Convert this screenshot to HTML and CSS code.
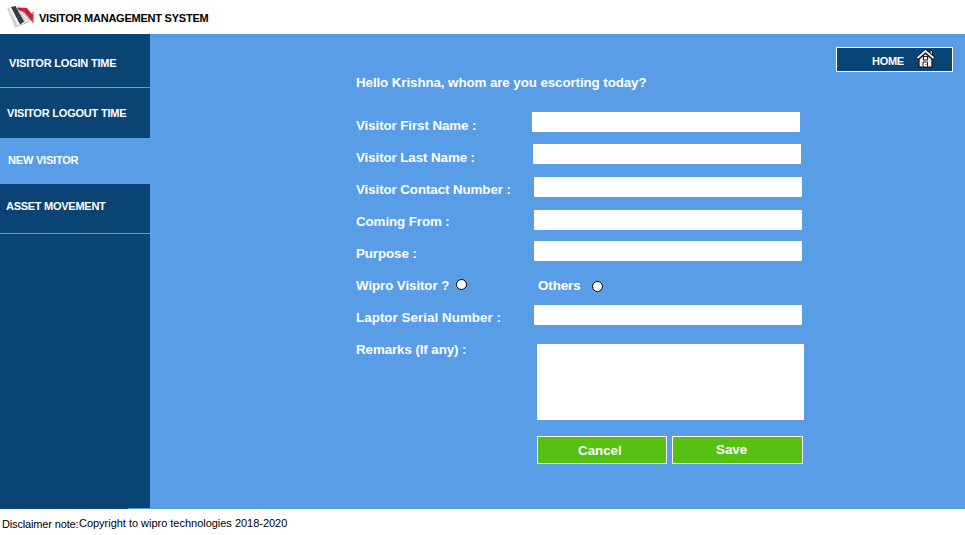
FILE: index.html
```html
<!DOCTYPE html>
<html lang="en">
<head>
<meta charset="utf-8">
<title>Visitor Management System</title>
<link rel="stylesheet" href="styles.css">
</head>
<body>
<header class="header">
  <svg class="logo" width="29" height="24" viewBox="0 0 29 24">
    <path d="M1 3 9 1 19 2 27 11 26 17 20 18 11 22Z" fill="#e9ecec"/>
    <path d="M1 3 3 3 12 20 9 22Z" fill="#ccd1d1"/>
    <path d="M3 3 5 3 14 20 12 21Z" fill="#f6f8f8"/>
    <path d="M5 2 9.500 1 19 16 14 19.500Z" fill="#383c3c"/>
    <path d="M9.500 1 11 2 20.500 17 19 18Z" fill="#fff"/>
    <path d="M13 7 17 7 24 15 20 18Z" fill="#f8f8f8" stroke="#a6aeae" stroke-width=".8"/>
    <path d="M15 9 21 15.500M17 8 23 15" stroke="#969e9e" stroke-width=".8" stroke-dasharray="2 1"/>
    <path d="M11 2.500 21 3 25 8 27 9.500 26.500 17 20 9.500 18 7 12 5Z" fill="#cf2140"/>
    <path d="M27 7V18" stroke="#c91f3c"/>
    <path d="M9 22 20 18" stroke="#a7b0b0" stroke-dasharray="2 1"/>
  </svg>
  <h1 class="title">VISITOR MANAGEMENT SYSTEM</h1>
</header>
<div class="body">
  <nav class="sidebar">
    <a class="item login">VISITOR LOGIN TIME</a>
    <a class="item logout">VISITOR LOGOUT TIME</a>
    <a class="item active">NEW VISITOR</a>
    <a class="item asset">ASSET MOVEMENT</a>
    <span class="edge"></span>
  </nav>
  <main class="main">
    <form class="form">
      <p class="greeting">Hello Krishna, whom are you escorting today?</p>
      <div class="row"><label for="first">Visitor First Name :</label><input class="field first" id="first"></div>
      <div class="row"><label for="last">Visitor Last Name :</label><input class="field last" id="last"></div>
      <div class="row"><label for="contact">Visitor Contact Number :</label><input class="field contact" id="contact"></div>
      <div class="row"><label for="from">Coming From :</label><input class="field from" id="from"></div>
      <div class="row"><label for="purpose">Purpose :</label><input class="field purpose" id="purpose"></div>
      <div class="row">
        <div class="choice"><label for="wipro">Wipro Visitor ?</label><input class="radio" type="radio" name="kind" id="wipro"></div>
        <div class="choice others"><label for="other">Others</label><input class="radio" type="radio" name="kind" id="other"></div>
      </div>
      <div class="row"><label class="wide" for="serial">Laptor Serial Number :</label><input class="field serial" id="serial"></div>
      <div class="row remarks"><label for="remarks">Remarks (If any) :</label><textarea class="area" id="remarks"></textarea></div>
      <div class="actions">
        <button class="btn cancel" type="button">Cancel</button>
        <button class="btn save" type="button">Save</button>
      </div>
    </form>
    <a class="home"><span class="home-text">HOME</span>
      <svg class="house" width="19" height="20" viewBox="0 0 19 20">
        <path d="M14 1.500h2.500v6H14Z" fill="#ccc" stroke="#111"/>
        <path d="M3 9V18H16V9L9.500 3Z" fill="#f2f2f5" stroke="#111" stroke-width="1.200"/>
        <path d="M1.500 9.500 9.500 2.500 17.500 9.500" fill="none" stroke="#111" stroke-width="4.200"/>
        <path d="M1.500 9 9.500 2 17.500 9" fill="none" stroke="#f2f2f2" stroke-width="1.900"/>
        <path d="M7.500 7.500h4v3.500h-4Z" fill="#fff" stroke="#222" stroke-width="1.200"/>
        <path d="M7 13h4.500v5H7Z" fill="#fff" stroke="#222"/>
        <path d="M9.500 15h1v1h-1Z" fill="#333"/>
      </svg>
    </a>
  </main>
</div>
<footer class="footer"><span class="note">Disclaimer note:</span><span class="copy">Copyright to wipro technologies 2018-2020</span></footer>
</body>
</html>
```
FILE: styles.css
```css
* { box-sizing: border-box; }
body {
  margin: 0;
  width: 965px;
  height: 535px;
  overflow: hidden;
  display: flex;
  flex-direction: column;
  background: #fff;
  font-family: "Liberation Sans", Arial, sans-serif;
}
.header {
  height: 34px;
  display: flex;
  padding: 5px 0 0 6px;
}
.logo { flex: none; }
.title {
  margin: 6px 0 0 4px;
  font-size: 11px;
  line-height: 14px;
  letter-spacing: -0.23px;
}
.body {
  height: 475px;
  display: flex;
  color: #fff;
  font-weight: bold;
}
.sidebar {
  width: 150px;
  display: flex;
  flex-direction: column;
  background: #0a4474;
  font-size: 11px;
  letter-spacing: -0.2px;
}
.item { line-height: 14px; flex: none; }
.login { height: 54px; padding: 22px 0 0 9px; border-bottom: 1px solid #589de6; }
.logout { height: 50px; padding: 18px 0 0 7px; }
.active { height: 46px; padding: 15px 0 0 8px; background: #589de6; }
.asset { height: 50px; padding: 15px 0 0 6px; border-bottom: 1px solid #589de6; letter-spacing: -0.27px; }
.edge { width: 22px; height: 1px; margin: auto 0 0 auto; background: #589de6; }
.main {
  flex: 1;
  display: flex;
  justify-content: space-between;
  align-items: flex-start;
  padding: 13px 12px 0 206px;
  background: #589de6;
}
.form {
  width: 448px;
  padding-top: 20px;
  font-size: 13.33px;
  letter-spacing: -0.08px;
}
.greeting { margin: 0 0 11px; height: 31px; line-height: 31px; }
.row {
  height: 32px;
  display: grid;
  grid-template-columns: 176px 1fr;
  line-height: 32px;
}
.row label { padding-top: 1px; }
.wide { letter-spacing: 0.06px; }
.field, .area { border: 0; padding: 0 4px; background: #fff; border-radius: 0; outline: 0; }
.field { width: 268px; height: 20px; }
.first { margin: 3px 0 0; }
.last { margin: 3px 0 0 1px; }
.contact { margin: 4px 0 0 2px; }
.from { margin: 5px 0 0 2px; }
.purpose { margin: 4px 0 0 2px; }
.serial { margin: 4px 0 0 2px; }
.area { width: 267px; height: 76px; margin: 11px 0 0 5px; resize: none; }
.remarks { height: 87px; }
.choice { display: flex; gap: 7px; }
.others { padding-left: 6px; gap: 12px; }
.radio {
  appearance: none;
  width: 11px;
  height: 11px;
  margin: 10px 0 0;
  border: 1px solid #000;
  border-radius: 50%;
  background: #fff;
}
.others .radio { margin-top: 12px; }
.actions { display: flex; gap: 5px; padding: 16px 0 0 181px; }
.btn {
  height: 28px;
  border: 1px solid #fff;
  background: #56c013;
  color: #fff;
  font: bold 13.33px/26px "Liberation Sans", Arial, sans-serif;
  text-align: left;
}
.cancel { width: 130px; padding: 1px 0 0 40px; }
.save { width: 131px; padding: 0 0 1px 43px; }
.home {
  width: 117px;
  height: 25px;
  display: flex;
  padding: 1px 0 0 35px;
  border: 1px solid #fff;
  background: #0a4474;
  font-size: 11px;
}
.home-text { width: 44px; line-height: 25px; letter-spacing: -0.3px; }
.house { flex: none; }
.footer { display: flex; padding: 7px 0 0 2px; font-size: 11px; line-height: 14px; color: #000; }
.note { width: 77px; padding-top: 1px; letter-spacing: -0.15px; flex: none; }
.copy { letter-spacing: -0.02px; }
```
